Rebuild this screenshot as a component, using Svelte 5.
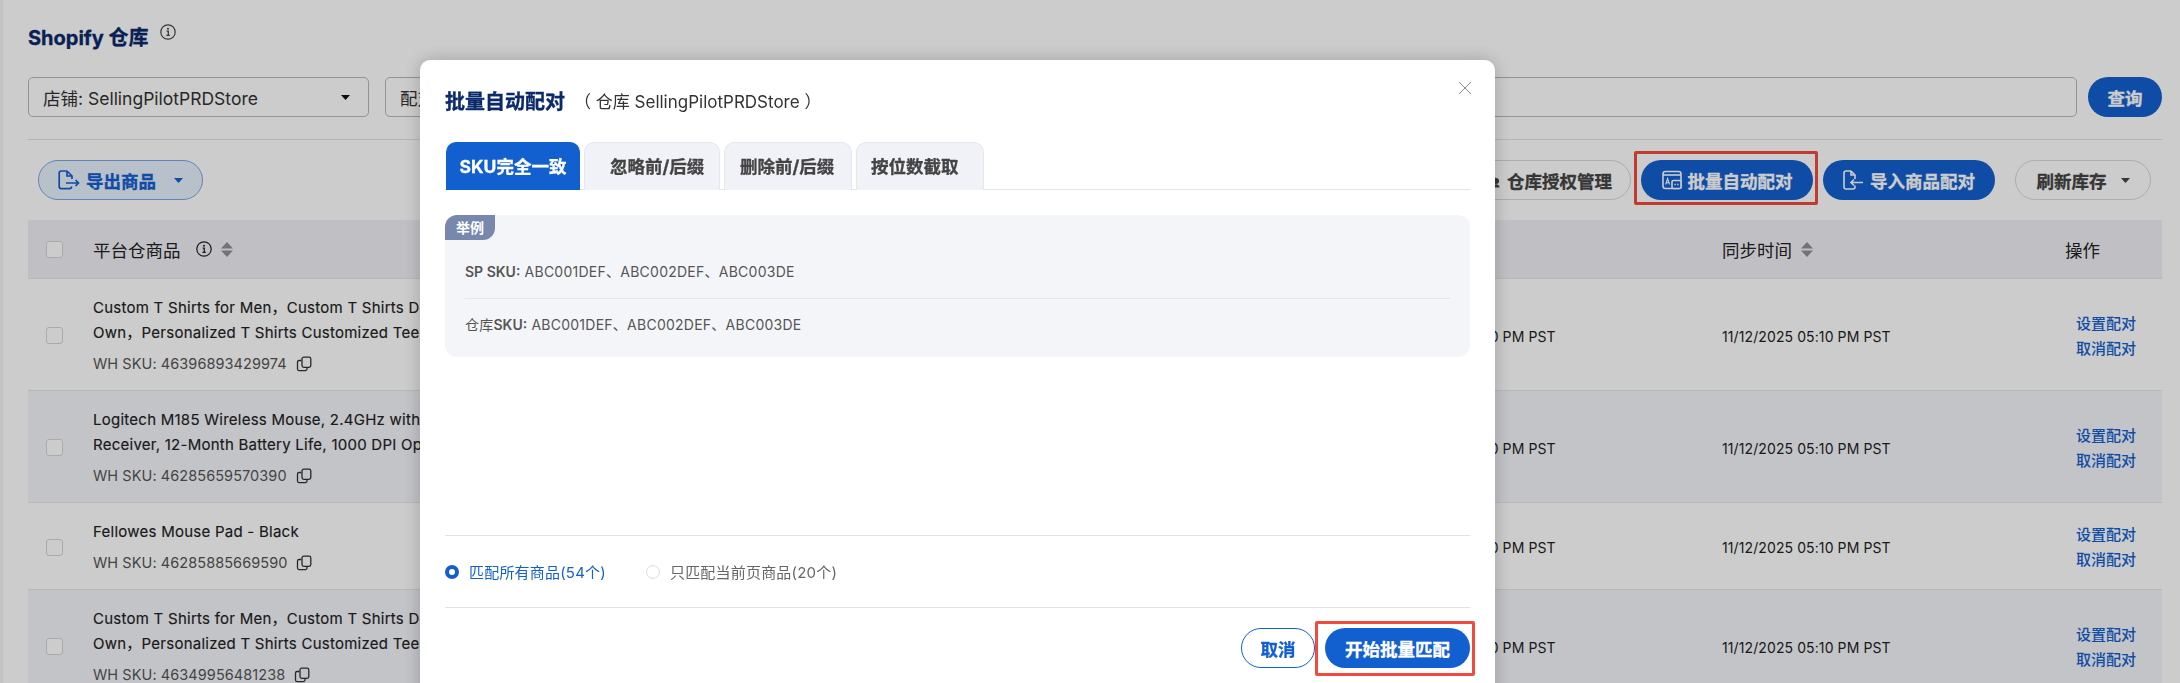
<script>
  const rows = [
    { lines: ['Custom T Shirts for Men，Custom T Shirts Design Your', 'Own，Personalized T Shirts Customized Tees'], sku: '46396893429974', h: 'tall' },
    { lines: ['Logitech M185 Wireless Mouse, 2.4GHz with USB', 'Receiver, 12-Month Battery Life, 1000 DPI Optical'], sku: '46285659570390', h: 'tall', alt: true },
    { lines: ['Fellowes Mouse Pad - Black'], sku: '46285885669590', h: 'short' },
    { lines: ['Custom T Shirts for Men，Custom T Shirts Design Your', 'Own，Personalized T Shirts Customized Tees'], sku: '46349956481238', h: 'tall', alt: true }
  ];
  const time = '11/12/2025 05:10 PM PST';
</script>

{#snippet info()}
  <svg class="ico" width="16" height="16" viewBox="0 0 16 16" fill="none" stroke="currentColor">
    <circle cx="8" cy="8" r="7.2" stroke-width="1.2" />
    <path d="M6.6 7.2H8.3V11.4M6.4 11.4H9.8" stroke-width="1.3" />
    <circle cx="8" cy="4.7" r="1" fill="currentColor" stroke="none" />
  </svg>
{/snippet}

{#snippet sort()}
  <svg class="ico" width="12" height="15" viewBox="0 0 12 15" fill="#8f9096">
    <path d="M6 0L12 6.5H0ZM6 15L0 8.5H12Z" />
  </svg>
{/snippet}

{#snippet caret(color)}
  <svg class="ico" width="9" height="5" viewBox="0 0 9 5" fill={color}>
    <path d="M0 0H9L4.5 5Z" />
  </svg>
{/snippet}

{#snippet copy()}
  <svg class="ico" width="16" height="16" viewBox="0 0 16 16" fill="none" stroke="currentColor" stroke-width="1.3">
    <path d="M5.5 4.5H3A1.6 1.6 0 0 0 1.5 6V13A1.6 1.6 0 0 0 3 14.6H9.5A1.6 1.6 0 0 0 11 13V11.6" />
    <rect x="6" y="1.2" width="8.8" height="10.2" rx="1.8" />
  </svg>
{/snippet}

<div class="page">
  <div class="heading">
    <h1>Shopify 仓库</h1>
    <span class="head-info">{@render info()}</span>
  </div>

  <div class="filters">
    <div class="select">
      <span>店铺: SellingPilotPRDStore</span>
      {@render caret('#111')}
    </div>
    <div class="search">配对状态</div>
    <button class="primary query">查询</button>
  </div>

  <div class="toolbar">
    <button class="export">
      <svg class="ico" width="22" height="20" viewBox="0 0 22 20" fill="none" stroke="currentColor" stroke-width="1.7">
        <path d="M9 1H3.2A2 2 0 0 0 1.2 3V16.6A2 2 0 0 0 3.2 18.6H11.5A2 2 0 0 0 13.5 16.6M9 1L14 6V9M9 1V6H14M8 13H20.5M17.5 10L20.5 13L17.5 16" />
      </svg>
      导出商品
      <span class="export-caret">{@render caret('#1260d0')}</span>
    </button>
    <div class="spacer"></div>
    <button class="ghost auth">
      <svg class="ico" width="20" height="20" viewBox="0 0 20 20" fill="none" stroke="#444" stroke-width="1.8">
        <path d="M1 8L8 2L15 8M3 7V17H10" />
        <circle cx="16" cy="11" r="3" fill="#444" stroke="none" />
        <path d="M12.5 17.5C12.5 13 19.5 13 19.5 17.5Z" fill="#444" stroke="none" />
      </svg>
      仓库授权管理
    </button>
    <button class="primary batch">
      <span class="mark mark-a"></span>
      <svg class="ico" width="20" height="20" viewBox="0 0 20 20" fill="none" stroke="currentColor" stroke-width="1.6">
        <rect x="1" y="1.5" width="18" height="17" rx="2.4" />
        <path d="M1 5H19" />
        <rect x="10" y="10.5" width="9" height="8" rx="1.2" fill="#1260d0" />
        <path d="M3.6 14.5L5.6 8.5L7.6 14.5M4.3 12.6H6.9" stroke-width="1.1" />
        <path d="M12.4 14.5H13.8M15.2 14.5H16.6" stroke-width="1.5" />
      </svg>
      批量自动配对
    </button>
    <button class="primary import">
      <svg class="ico" width="21" height="20" viewBox="0 0 21 20" fill="none" stroke="currentColor" stroke-width="1.6">
        <path d="M8 1H3A2 2 0 0 0 1 3V17A2 2 0 0 0 3 19H10A2 2 0 0 0 12 17V15.5M8 1L12 5V9M8 1V5H12M20 12.5H8M11 9.5L8 12.5L11 15.5" />
      </svg>
      导入商品配对
    </button>
    <button class="ghost refresh">
      刷新库存
      <span class="refresh-caret">{@render caret('#444')}</span>
    </button>
  </div>

  <div class="table">
    <div class="tr thead">
      <div class="cell-check"><span class="check"></span></div>
      <div class="th">平台仓商品 <span class="th-info">{@render info()}</span> {@render sort()}</div>
      <div class="th"></div>
      <div class="th">同步时间 {@render sort()}</div>
      <div class="th">操作</div>
    </div>
    {#each rows as r}
      <div class="tr body" class:alt={r.alt} class:short={r.h === 'short'}>
        <div class="cell-check"><span class="check"></span></div>
        <div class="product">
          {#each r.lines as l}<div class="pname">{l}</div>{/each}
          <div class="sku">WH SKU: {r.sku} <span class="copy">{@render copy()}</span></div>
        </div>
        <div class="time">{time}</div>
        <div class="time">{time}</div>
        <div class="links"><span>设置配对</span><span>取消配对</span></div>
      </div>
    {/each}
  </div>
</div>

<div class="scrim"></div>

<div class="modal" role="dialog" aria-modal="true">
  <svg class="close" width="14" height="14" viewBox="0 0 14 14" stroke="#8a8a8a" stroke-width="1">
    <path d="M1 1L13 13M13 1L1 13" />
  </svg>
  <header>
    <h2>批量自动配对</h2>
    <span class="sub">（ 仓库 SellingPilotPRDStore ）</span>
  </header>

  <div class="tabs">
    <div class="tab active">SKU完全一致</div>
    <div class="tab second">忽略前/后缀</div>
    <div class="tab third">删除前/后缀</div>
    <div class="tab fourth">按位数截取</div>
  </div>

  <div class="example">
    <span class="badge">举例</span>
    <div class="ex-row"><b>SP SKU:</b> ABC001DEF、ABC002DEF、ABC003DE</div>
    <div class="ex-row">仓库<b>SKU:</b> ABC001DEF、ABC002DEF、ABC003DE</div>
  </div>

  <div class="scope">
    <label class="on"><span class="radio"></span>匹配所有商品(54个)</label>
    <label><span class="radio"></span>只匹配当前页商品(20个)</label>
  </div>

  <footer>
    <button class="cancel">取消</button>
    <button class="primary start">
      <span class="mark mark-b"></span>
      开始批量匹配
    </button>
  </footer>
</div>

<style>
  :global(body) {
    margin: 0;
    height: 683px;
    overflow: hidden;
    background: #fff;
    font-family: Inter, 'Noto Sans CJK SC', sans-serif;
    color: #333;
  }
  .page {
    height: 683px;
    overflow: hidden;
    border-left: 3px solid #f4f4f8;
    padding: 0 18px 0 25px;
  }
  button {
    font-family: inherit;
    cursor: pointer;
  }
  .ico {
    display: inline-block;
    flex: 0 0 auto;
    vertical-align: middle;
  }
  .heading {
    display: flex;
    align-items: flex-start;
    height: 77px;
    padding-top: 24px;
    box-sizing: border-box;
  }
  h1 {
    margin: 0;
    font-size: 20px;
    line-height: 28px;
    font-weight: 700;
    color: #0a2a6b;
    -webkit-text-stroke: 0.3px;
  }
  .head-info {
    margin: -1px 0 0 11px;
    color: #444;
    line-height: 15px;
  }
  .filters {
    display: flex;
    gap: 11px;
    padding-bottom: 22px;
    border-bottom: 1px solid #e2e2e6;
  }
  .select,
  .search {
    height: 40px;
    box-sizing: border-box;
    border: 1px solid #b8b8bc;
    border-radius: 5px;
    font-size: 17.5px;
    display: flex;
    align-items: center;
    padding: 0 14px;
    color: #333;
  }
  .select {
    width: 341px;
    justify-content: space-between;
    gap: 8px;
    margin-right: 5px;
  }
  .select .ico {
    margin-right: 4px;
  }
  .search {
    flex: 1;
  }
  .primary {
    border: 0;
    background: #1260d0;
    color: #fff;
    font-weight: 700;
    border-radius: 999px;
    position: relative;
  }
  .query {
    width: 74px;
    height: 40px;
    font-size: 17.5px;
    -webkit-text-stroke: 0.3px;
  }
  .toolbar {
    display: flex;
    align-items: center;
    height: 40px;
    margin: 20px 11px 20px 10px;
  }
  .toolbar button {
    height: 40px;
    box-sizing: border-box;
    border-radius: 999px;
    display: flex;
    align-items: center;
    justify-content: center;
    font-size: 17.5px;
    font-weight: 700;
    white-space: nowrap;
    padding: 0;
    -webkit-text-stroke: 0.3px;
  }
  .spacer {
    flex: 1;
  }
  .export {
    width: 165px;
    gap: 6px;
    border: 1px solid #7ba6ea;
    background: #e7f0fd;
    color: #1260d0;
  }
  .export-caret {
    margin-left: 12px;
    display: flex;
  }
  .ghost {
    background: #fff;
    border: 1px solid #d9d9dd;
    color: #444;
  }
  .toolbar .auth {
    width: 200px;
    gap: 7px;
    margin-right: 10px;
    justify-content: flex-end;
    padding-right: 18px;
  }
  .batch {
    width: 172px;
    gap: 6px;
  }
  .import {
    width: 172px;
    gap: 6px;
    margin: 0 20px 0 10px;
  }
  .refresh {
    width: 136px;
    gap: 6px;
  }
  .refresh-caret {
    display: flex;
    margin-left: 8px;
  }
  .mark {
    position: absolute;
    border: 3px solid #f04b3e;
    border-radius: 2px;
    pointer-events: none;
  }
  .mark-a {
    inset: -9px -5px -5px -7px;
  }
  .mark-b {
    inset: -7px -5px -8px -10px;
  }
  .tr {
    display: grid;
    grid-template-columns: 65px 1294px 335px 343px 97px;
    align-items: center;
    height: 112px;
    border-bottom: 1px solid #e6e6ea;
    box-sizing: border-box;
  }
  .tr.short {
    height: 87px;
  }
  .tr.alt {
    background: #f4f5fa;
  }
  .thead {
    height: 59px;
    background: #f1f1f6;
  }
  .th {
    font-size: 17.5px;
    color: #222;
    display: flex;
    align-items: center;
    gap: 9px;
  }
  .th-info {
    display: flex;
    margin-left: 6px;
    color: #222;
  }
  .cell-check {
    padding-left: 18px;
    display: flex;
  }
  .body .cell-check {
    padding-top: 2px;
  }
  .check {
    width: 17px;
    height: 17px;
    box-sizing: border-box;
    border: 1px solid #d5d5d9;
    background: #fff;
    border-radius: 3px;
  }
  .product {
    min-width: 0;
    overflow: hidden;
    color: #222;
  }
  .pname {
    font-size: 15px;
    letter-spacing: 0.25px;
    line-height: 25px;
    font-weight: 400;
    -webkit-text-stroke: 0.15px;
    white-space: nowrap;
  }
  .sku {
    display: flex;
    align-items: center;
    gap: 9px;
    font-size: 14.5px;
    letter-spacing: 0.07px;
    line-height: 20px;
    color: #555;
    margin-top: 9px;
  }
  .copy {
    display: flex;
    color: #333;
  }
  .time {
    font-size: 14px;
    letter-spacing: 0.1px;
    color: #222;
    white-space: nowrap;
    padding-top: 3px;
  }
  .links {
    display: flex;
    flex-direction: column;
    margin-left: 11px;
    padding-top: 2px;
    font-size: 15px;
    line-height: 25px;
    font-weight: 500;
    color: #1260d0;
    white-space: nowrap;
  }
  .scrim {
    position: fixed;
    inset: 0;
    background: rgba(0, 0, 0, 0.2);
  }
  .modal {
    position: fixed;
    left: 420px;
    top: 60px;
    width: 1075px;
    height: 680px;
    box-sizing: border-box;
    background: #fff;
    border-radius: 10px;
    padding: 0 25px;
    box-shadow: 0 0 18px rgba(0, 0, 0, 0.22);
  }
  .close {
    position: absolute;
    top: 21px;
    right: 23px;
  }
  header {
    display: flex;
    align-items: center;
    height: 80px;
    margin-bottom: 2px;
    white-space: nowrap;
  }
  h2 {
    margin: 0;
    font-size: 20px;
    font-weight: 700;
    color: #0a2a6b;
    -webkit-text-stroke: 0.3px;
  }
  .sub {
    margin-left: 9px;
    font-size: 17px;
    color: #333;
  }
  .tabs {
    display: flex;
    gap: 4px;
    height: 48px;
    border-bottom: 1px solid #e4e5ea;
    box-sizing: border-box;
    padding-left: 1px;
  }
  .tab {
    height: 48px;
    box-sizing: border-box;
    background: #f1f2f7;
    border: 1px solid #e6e7ee;
    border-bottom: 0;
    border-radius: 10px 10px 0 0;
    font-size: 17.5px;
    font-weight: 700;
    line-height: 47px;
    color: #444;
    white-space: nowrap;
    -webkit-text-stroke: 0.3px;
  }
  .tab.active {
    background: #1260d0;
    border-color: #1260d0;
    color: #fff;
    width: 134px;
    text-align: center;
  }
  .tab.second {
    width: 136px;
    padding-left: 25px;
  }
  .tab.third {
    width: 128px;
    padding-left: 15px;
  }
  .tab.fourth {
    width: 128px;
    padding-left: 14px;
  }
  .example {
    position: relative;
    margin-top: 25px;
    height: 142px;
    box-sizing: border-box;
    padding: 32px 20px 0;
    background: #f4f5f9;
    border-radius: 12px;
  }
  .badge {
    position: absolute;
    left: 0;
    top: 0;
    width: 50px;
    height: 25px;
    background: #7787ae;
    color: #fff;
    font-size: 14px;
    font-weight: 700;
    line-height: 25px;
    text-align: center;
    border-radius: 12px 0 12px 0;
  }
  .ex-row {
    height: 52px;
    line-height: 52px;
    font-size: 14px;
    letter-spacing: 0.25px;
    color: #555;
    white-space: nowrap;
  }
  .ex-row:first-of-type {
    height: 51px;
    line-height: 50px;
    border-bottom: 1px solid #e6e7ec;
  }
  .ex-row b {
    font-weight: 600;
    letter-spacing: 0;
  }
  .scope {
    margin-top: 178px;
    height: 71px;
    border-top: 1px solid #e1e1e6;
    border-bottom: 1px solid #e1e1e6;
    display: flex;
    align-items: center;
    gap: 40px;
    font-size: 15px;
    letter-spacing: 0.2px;
    color: #666;
  }
  .scope label {
    display: flex;
    align-items: center;
    gap: 10px;
    white-space: nowrap;
  }
  .scope .on {
    color: #1260d0;
  }
  .radio {
    width: 14px;
    height: 14px;
    box-sizing: border-box;
    border: 1px solid #dcdde2;
    border-radius: 50%;
    background: #fff;
  }
  .on .radio {
    border: 4px solid #1260d0;
  }
  footer {
    display: flex;
    justify-content: flex-end;
    gap: 10px;
    margin-top: 20px;
  }
  footer button {
    height: 40px;
    box-sizing: border-box;
    border-radius: 999px;
    font-size: 17.5px;
    font-weight: 700;
    padding: 0;
    -webkit-text-stroke: 0.3px;
  }
  .cancel {
    width: 74px;
    background: #fff;
    border: 1px solid #1260d0;
    color: #1260d0;
  }
  .start {
    width: 145px;
  }
</style>
